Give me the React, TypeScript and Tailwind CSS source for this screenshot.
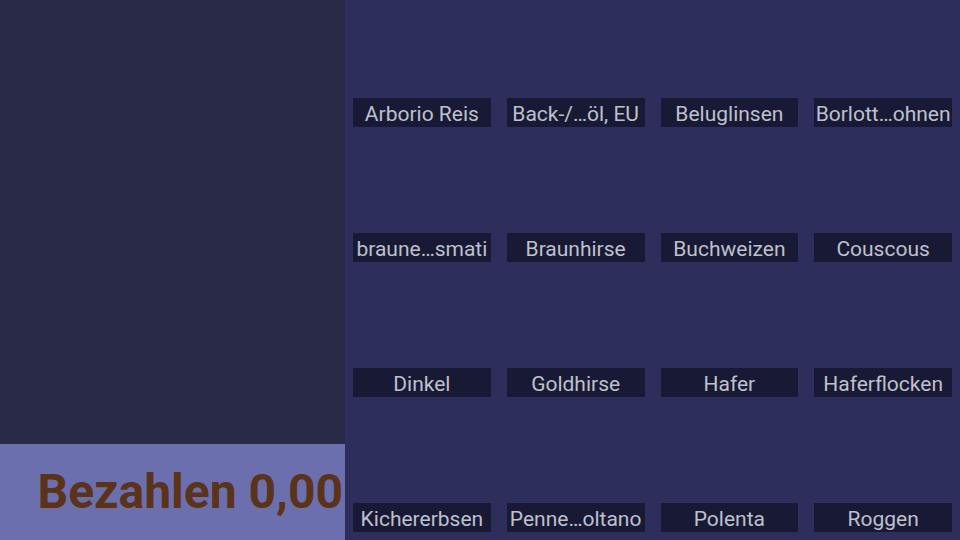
import React from "react";

const items = [
  "Arborio Reis", "Back-/…öl, EU", "Beluglinsen", "Borlott…ohnen",
  "braune…smati", "Braunhirse", "Buchweizen", "Couscous",
  "Dinkel", "Goldhirse", "Hafer", "Haferflocken",
  "Kichererbsen", "Penne…oltano", "Polenta", "Roggen",
];

export default function App() {
  return (
    <div className="flex w-[960px] h-[540px] overflow-hidden" style={{ fontFamily: "Roboto, 'Noto Sans', sans-serif" }}>
      <div className="w-[345px] flex flex-col bg-[#292a47]">
        <div className="flex-1" />
        <div className="h-[96px] bg-[#6b6fae] flex items-center justify-end overflow-hidden pr-[2px]">
          <span className="text-[48px] font-bold text-[#5b3318] whitespace-nowrap leading-none">Bezahlen 0,00</span>
        </div>
      </div>
      <div className="flex-1 bg-[#2d2e5c] grid grid-cols-4 grid-rows-4 gap-x-4 px-2">
        {items.map((t) => (
          <div key={t} className="flex items-end pb-2">
            <div className="w-full h-[29px] bg-[#181a35] text-[#bfc0cc] text-[21px] flex items-center justify-center whitespace-nowrap overflow-hidden leading-none pt-[4px]">
              {t}
            </div>
          </div>
        ))}
      </div>
    </div>
  );
}
